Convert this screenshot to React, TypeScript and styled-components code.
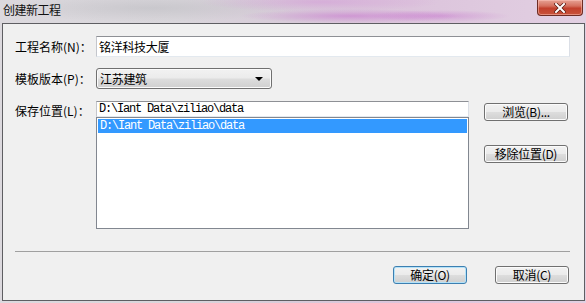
import React from 'react';
import styled, { createGlobalStyle, css } from 'styled-components';

const GlobalStyle = createGlobalStyle`
  html, body {
    margin: 0;
    padding: 0;
    background: #dcd4dc;
  }
  * {
    box-sizing: border-box;
  }
`;

const uiFont = `"Noto Sans CJK SC", "Liberation Sans", sans-serif`;
const monoFont = `"Liberation Mono", "Noto Sans CJK SC", monospace`;

const Window = styled.div`
  width: 586px;
  height: 303px;
  overflow: hidden;
  font-family: ${uiFont};
  font-size: 12px;
  color: #000;
  background:
    radial-gradient(ellipse 110px 7px at 350px 16px, rgba(190, 80, 200, 0.4), transparent),
    radial-gradient(ellipse 70px 6px at 440px 16px, rgba(190, 90, 200, 0.35), transparent),
    radial-gradient(ellipse 120px 10px at 320px 2px, rgba(210, 140, 215, 0.45), transparent),
    radial-gradient(ellipse 150px 14px at 150px 8px, rgba(185, 185, 190, 0.5), transparent),
    linear-gradient(90deg, #dcd9de 0%, #d9d6db 30%, #d8cbd9 50%, #dcc4dc 70%, #e2d0e2 100%);
`;

const TitleBar = styled.div`
  height: 23px;
  display: flex;
  align-items: flex-start;
  justify-content: space-between;
  padding-left: 3px;
  padding-right: 3px;
`;

const TitleText = styled.div`
  font-size: 12px;
  line-height: 12px;
  margin-top: 4px;
  letter-spacing: -0.5px;
  color: #111;
`;

const CloseButton = styled.div`
  width: 46px;
  height: 16px;
  display: flex;
  align-items: center;
  justify-content: center;
  border: 1px solid #6e2c24;
  border-top: none;
  border-radius: 0 0 4px 4px;
  background: linear-gradient(#e6a294 0%, #d5705e 40%, #c2402c 55%, #c8533b 100%);
  box-shadow: inset 0 0 0 1px rgba(255, 200, 190, 0.5);
`;

const Client = styled.div`
  margin-left: 2px;
  width: 583px;
  height: 278px;
  border: 1px solid #5e5e62;
  background: #f0f0f0;
  padding: 12px 14px 0 12px;
  display: flex;
  flex-direction: column;
`;

const Row = styled.div<{ $gap?: number }>`
  display: flex;
  align-items: center;
  margin-top: ${(p) => p.$gap ?? 0}px;
`;

const Label = styled.div`
  width: 81px;
  flex-shrink: 0;
  font-size: 12px;
  line-height: 14px;
  white-space: nowrap;
`;

const TextInput = styled.div<{ $h: number; $mono?: boolean }>`
  height: ${(p) => p.$h}px;
  flex: 1;
  background: #fff;
  border: 1px solid #abadb3;
  border-top-color: #8e9095;
  border-left-color: #c4c6cc;
  border-right-color: #dbdfe6;
  border-bottom-color: #e3e9ef;
  display: flex;
  align-items: center;
  padding-left: 2px;
  white-space: nowrap;
  ${(p) =>
    p.$mono
      ? css`
          font-family: ${monoFont};
          font-size: 12px;
          letter-spacing: -1.2px;
        `
      : css`
          font-size: 12px;
          letter-spacing: -0.3px;
        `}
`;

const winButton = css`
  border: 1px solid #707070;
  border-radius: 3px;
  background: linear-gradient(#f2f2f2 0%, #ebebeb 48%, #dddddd 52%, #cfcfcf 100%);
  box-shadow: inset 0 0 0 1px #fbfbfb;
`;

const Select = styled.div`
  ${winButton};
  width: 176px;
  height: 21px;
  display: flex;
  align-items: center;
  justify-content: space-between;
  padding: 0 8px 0 3px;
  font-size: 12px;
  letter-spacing: -0.3px;
`;

const Arrow = styled.span`
  width: 0;
  height: 0;
  border-left: 4px solid transparent;
  border-right: 4px solid transparent;
  border-top: 4px solid #000;
  margin-top: 1px;
`;

const LocationRow = styled.div`
  display: flex;
  margin-top: 12px;
`;

const LocationLabel = styled(Label)`
  height: 19px;
  display: flex;
  align-items: center;
`;

const LocationColumn = styled.div`
  display: flex;
  flex-direction: column;
  width: 373px;
`;

const ListBox = styled.div`
  height: 112px;
  background: #fff;
  border: 1px solid #828790;
  padding: 1px;
`;

const ListItem = styled.div<{ $selected?: boolean }>`
  height: 14px;
  line-height: 14px;
  padding-left: 2px;
  font-family: ${monoFont};
  font-size: 12px;
  letter-spacing: -1.2px;
  white-space: nowrap;
  color: ${(p) => (p.$selected ? '#fff' : '#000')};
  background: ${(p) => (p.$selected ? '#3399ff' : 'transparent')};
`;

const SideButtons = styled.div`
  display: flex;
  flex-direction: column;
  gap: 24px;
  margin-left: 15px;
  padding-top: 2px;
`;

const Button = styled.div<{ $w: number; $default?: boolean }>`
  ${winButton};
  width: ${(p) => p.$w}px;
  height: 18px;
  display: flex;
  align-items: center;
  justify-content: center;
  font-size: 12px;
  line-height: 12px;
  letter-spacing: -0.3px;
  white-space: nowrap;
  ${(p) =>
    p.$default &&
    css`
      border-color: #3c7fb1;
      box-shadow: inset 0 0 0 1px #b4e2f8;
    `}
`;

const Separator = styled.div`
  height: 1px;
  margin-top: 22px;
  background: #a0a0a0;
`;

const Footer = styled.div`
  display: flex;
  justify-content: flex-end;
  gap: 28px;
  margin-top: 14px;
  margin-right: 1px;
`;

const CloseGlyph = () => (
  <svg width="12" height="10" viewBox="0 0 12 10">
    <path d="M2 1 L10 9 M10 1 L2 9" stroke="#5a1a12" strokeWidth="3.4" strokeLinecap="square" />
    <path d="M2 1 L10 9 M10 1 L2 9" stroke="#fff" strokeWidth="2" strokeLinecap="square" />
  </svg>
);

const App = () => {
  const path = 'D:\\Iant Data\\ziliao\\data';
  return (
    <>
      <GlobalStyle />
      <Window>
        <TitleBar>
          <TitleText>创建新工程</TitleText>
          <CloseButton>
            <CloseGlyph />
          </CloseButton>
        </TitleBar>
        <Client>
          <Row>
            <Label>工程名称(N)：</Label>
            <TextInput $h={21}>铭洋科技大厦</TextInput>
          </Row>
          <Row $gap={11}>
            <Label>模板版本(P)：</Label>
            <Select>
              <span>江苏建筑</span>
              <Arrow />
            </Select>
          </Row>
          <LocationRow>
            <LocationLabel>保存位置(L)：</LocationLabel>
            <LocationColumn>
              <TextInput $h={19} $mono>
                {path}
              </TextInput>
              <ListBox>
                <ListItem $selected>{path}</ListItem>
              </ListBox>
            </LocationColumn>
            <SideButtons>
              <Button $w={84}>浏览(B)...</Button>
              <Button $w={84}>移除位置(D)</Button>
            </SideButtons>
          </LocationRow>
          <Separator />
          <Footer>
            <Button $w={74} $default>
              确定(O)
            </Button>
            <Button $w={74}>取消(C)</Button>
          </Footer>
        </Client>
      </Window>
    </>
  );
};

export default App;
